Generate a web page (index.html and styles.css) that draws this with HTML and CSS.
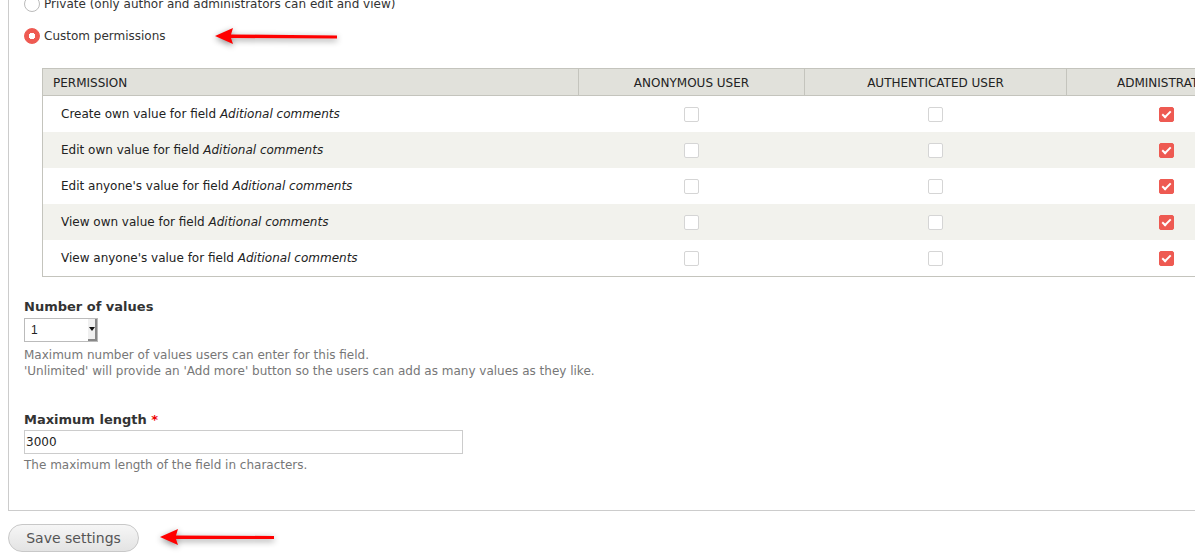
FILE: index.html
```html
<!DOCTYPE html>
<html lang="en">
<head>
  <meta charset="UTF-8" />
  <meta name="viewport" content="width=device-width, initial-scale=1.0" />
  <title>Field settings</title>
  <link rel="stylesheet" href="styles.css">
</head>
<body>
  <form class="settings">
    <div class="fieldset">
      <div class="radios">
        <label class="radio"><span class="radio-btn"></span>Private (only author and administrators can edit and view)</label>
        <label class="radio"><span class="radio-btn on"></span>Custom permissions</label>
      </div>

      <table class="perms">
        <thead>
          <tr>
            <th class="c-perm">Permission</th>
            <th class="c-role">Anonymous user</th>
            <th class="c-auth">Authenticated user</th>
            <th class="c-admin">Administrator</th>
          </tr>
        </thead>
        <tbody>
          <tr>
            <td>Create own value for field <em>Aditional comments</em></td>
            <td><span class="box"></span></td>
            <td><span class="box"></span></td>
            <td><span class="box on"></span></td>
          </tr>
          <tr>
            <td>Edit own value for field <em>Aditional comments</em></td>
            <td><span class="box"></span></td>
            <td><span class="box"></span></td>
            <td><span class="box on"></span></td>
          </tr>
          <tr>
            <td>Edit anyone's value for field <em>Aditional comments</em></td>
            <td><span class="box"></span></td>
            <td><span class="box"></span></td>
            <td><span class="box on"></span></td>
          </tr>
          <tr>
            <td>View own value for field <em>Aditional comments</em></td>
            <td><span class="box"></span></td>
            <td><span class="box"></span></td>
            <td><span class="box on"></span></td>
          </tr>
          <tr>
            <td>View anyone's value for field <em>Aditional comments</em></td>
            <td><span class="box"></span></td>
            <td><span class="box"></span></td>
            <td><span class="box on"></span></td>
          </tr>
        </tbody>
      </table>

      <div class="item item-values">
        <label class="item-label">Number of values</label>
        <div class="select"><span>1</span><span class="select-arrow"></span></div>
        <div class="desc">Maximum number of values users can enter for this field.<br>'Unlimited' will provide an 'Add more' button so the users can add as many values as they like.</div>
      </div>

      <div class="item item-length">
        <label class="item-label">Maximum length <span class="req">*</span></label>
        <div class="text-input">3000</div>
        <div class="desc">The maximum length of the field in characters.</div>
      </div>
    </div>

    <div class="actions">
      <button type="button" class="btn">Save settings</button>
    </div>
  </form>

  <!-- pointer arrows -->
  <svg class="arrow arrow-top" width="140" height="30" viewBox="0 0 140 30">
    <path d="M6 14 L24 6 L22 12.5 L128 13.5 L128 16.5 L22 16 L24 22 Z" fill="#f00" />
  </svg>
  <svg class="arrow arrow-bottom" width="130" height="30" viewBox="0 0 130 30">
    <path d="M6 14 L24 6 L22 12.5 L120 13 L120 16 L22 16 L24 22 Z" fill="#f00" />
  </svg>
</body>
</html>
```

FILE: styles.css
```css
body {
  margin: 0;
  overflow: hidden;
  font-family: "DejaVu Sans", sans-serif;
  font-size: 12px;
  color: #333;
  background: #fff;
}
.settings {
  width: 1300px;
}
.fieldset {
  display: flow-root;
  margin-left: 8px;
  border-left: 1px solid #ccc;
  border-bottom: 1px solid #ccc;
  padding-left: 15px;
  height: 511px;
  box-sizing: border-box;
}
.radios {
  margin-top: -11px;
}
.radio {
  display: flex;
  align-items: center;
  height: 30px;
  gap: 4px;
  font-size: 12px;
}
.radio:last-child {
  padding-top: 2px;
}
.radio-btn {
  width: 14px;
  height: 14px;
  border: 1px solid #bbb;
  border-radius: 50%;
  box-sizing: content-box;
  background: #fff;
  display: inline-block;
}
.radio-btn.on {
  border-color: #ee5a52;
  background: radial-gradient(circle, #fff 0 3px, #ee5a52 3.5px);
}

.perms {
  border-collapse: collapse;
  margin: 17px 0 0 18px;
  border: 1px solid #c4c4bd;
  table-layout: fixed;
  width: 1225px;
}
.perms th {
  background: #e1e1db;
  height: 25px;
  padding: 1px 0 0;
  font-weight: normal;
  text-transform: uppercase;
  font-size: 12px;
  color: #222;
  border-left: 1px solid #c4c4bd;
  border-bottom: 1px solid #c4c4bd;
}
.perms th.c-perm {
  text-align: left;
  padding-left: 10px;
  width: 525px;
}
.c-role { width: 225px; }
.c-auth { width: 261px; }
.perms td {
  height: 36px;
  padding: 0;
  text-align: center;
  vertical-align: middle;
  font-size: 12px;
  color: #222;
}
.perms td:first-child {
  text-align: left;
  padding-left: 18px;
}
.perms tbody tr:nth-child(even) td {
  background: #f2f2ed;
}
.box {
  display: inline-block;
  width: 13px;
  height: 13px;
  border: 1px solid #d5d5d5;
  border-radius: 2px;
  background: #fff;
  vertical-align: middle;
  position: relative;
}
.box.on {
  background: #ee5a52;
  border-color: #ee5a52;
}
.box.on::after {
  content: "";
  position: absolute;
  left: 4px;
  top: 1px;
  width: 3px;
  height: 7px;
  border-right: 2px solid #fff;
  border-bottom: 2px solid #fff;
  transform: rotate(45deg);
}

.item-values {
  margin-top: 22px;
}
.item-length {
  margin-top: 33px;
}
.item-label {
  display: block;
  font-weight: bold;
  font-size: 13px;
  line-height: 16px;
  margin-bottom: 3px;
}
.item-length .item-label {
  margin-bottom: 2px;
}
.req {
  color: #e00;
}
.select {
  width: 74px;
  height: 24px;
  border: 1px solid #bbb;
  box-sizing: border-box;
  display: flex;
  align-items: center;
  justify-content: space-between;
  padding-left: 6px;
  font-family: "Liberation Sans", sans-serif;
  font-size: 12px;
  color: #222;
}
.select-arrow {
  width: 9px;
  height: 22px;
  background: #f0f0f0;
  border-right: 2px solid #888;
  border-bottom: 2px solid #888;
  box-sizing: border-box;
  position: relative;
}
.select-arrow::after {
  content: "";
  position: absolute;
  left: 1px;
  top: 8px;
  border-left: 3px solid transparent;
  border-right: 3px solid transparent;
  border-top: 4px solid #111;
}
.text-input {
  width: 439px;
  height: 24px;
  border: 1px solid #ccc;
  box-sizing: border-box;
  padding-left: 1px;
  line-height: 22px;
  font-size: 12px;
  color: #222;
}
.desc {
  color: #777;
  font-size: 12px;
  line-height: 16px;
  margin-top: 5px;
}
.item-length .desc {
  margin-top: 3px;
}

.actions {
  padding: 13px 0 0 8px;
}
.btn {
  width: 131px;
  height: 28px;
  border: 1px solid #c8c8c8;
  border-radius: 14px;
  background: linear-gradient(#f6f6f6, #e3e3e3);
  font-family: "DejaVu Sans", sans-serif;
  font-size: 14px;
  color: #555;
  padding: 0;
}

.arrow {
  position: absolute;
  filter: drop-shadow(0 2px 3px rgba(0, 0, 0, 0.45));
}
.arrow-top {
  left: 209px;
  top: 22px;
}
.arrow-bottom {
  left: 154px;
  top: 523px;
}
```
